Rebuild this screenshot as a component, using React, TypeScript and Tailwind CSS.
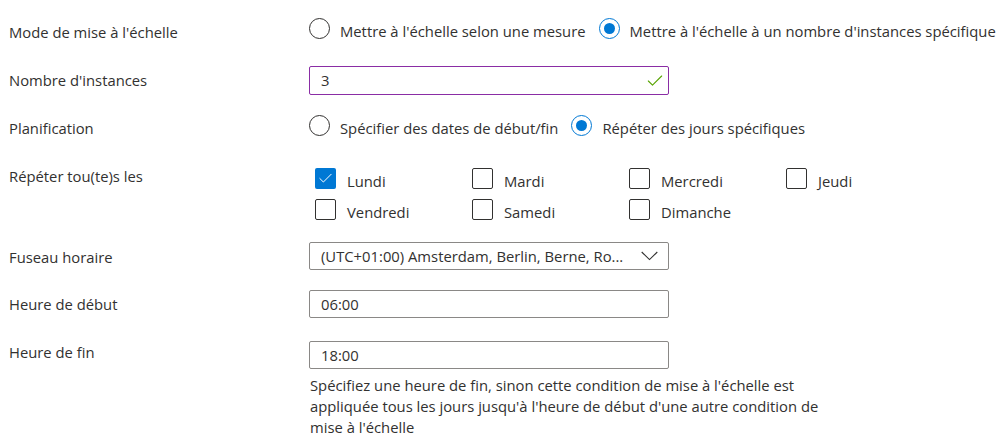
import { Check } from 'lucide-react';

function Radio({ label, checked }: { label: string; checked?: boolean }) {
  return (
    <label className="flex h-[21px] items-center">
      <span
        className={
          checked
            ? 'flex h-[21px] w-[21px] shrink-0 items-center justify-center rounded-full border border-[#0078d4] bg-white'
            : 'flex h-[21px] w-[21px] shrink-0 items-center justify-center rounded-full border border-[#323130] bg-white'
        }
      >
        {checked && <span className="h-[11px] w-[11px] rounded-full bg-[#0078d4]" />}
      </span>
      <span className="ml-[10px] translate-y-[2px] whitespace-nowrap leading-[20px]">{label}</span>
    </label>
  );
}

function Day({ label, checked }: { label: string; checked?: boolean }) {
  return (
    <label className="flex h-[21px] items-start">
      <span
        className={
          checked
            ? 'flex h-[21px] w-[21px] items-center justify-center rounded-[2px] bg-[#0078d4]'
            : 'h-[21px] w-[21px] rounded-[2px] border border-[#323130] bg-white'
        }
      >
        {checked && <Check className="h-[17px] w-[17px] text-white" strokeWidth={1.4} />}
      </span>
      <span className="ml-[11px] mt-[3px] leading-[20px]">{label}</span>
    </label>
  );
}

const days = [
  { label: 'Lundi', checked: true },
  { label: 'Mardi' },
  { label: 'Mercredi' },
  { label: 'Jeudi' },
  { label: 'Vendredi' },
  { label: 'Samedi' },
  { label: 'Dimanche' },
];

export default function App() {
  return (
    <div
      className="h-[442px] w-[1006px] overflow-hidden bg-white pl-[9px] pt-[18px] text-[14.8px] text-[#323130]"
      style={{ fontFamily: '"Open Sans", "Noto Sans", sans-serif' }}
    >
      {/* mode */}
      <div className="flex h-[21px]">
        <div className="w-[300px] shrink-0 pt-[4px] leading-[20px]">Mode de mise à l'échelle</div>
        <div className="flex gap-[13px]">
          <Radio label="Mettre à l'échelle selon une mesure" />
          <Radio label="Mettre à l'échelle à un nombre d'instances spécifique" checked />
        </div>
      </div>

      {/* instances */}
      <div className="mt-[27px] flex h-[29px]">
        <div className="w-[300px] shrink-0 pt-[4px] leading-[20px]">Nombre d'instances</div>
        <div className="flex h-[29px] w-[360px] items-center justify-between rounded-[2px] border border-[#8a2da5] pl-[11px] pr-[3px]">
          <span>3</span>
          <Check className="h-[20px] w-[20px] text-[#57a300]" strokeWidth={1.3} />
        </div>
      </div>

      {/* planif */}
      <div className="mt-[20px] flex h-[21px]">
        <div className="w-[300px] shrink-0 pt-[3px] leading-[20px]">Planification</div>
        <div className="flex gap-[13px]">
          <Radio label="Spécifier des dates de début/fin" />
          <Radio label="Répéter des jours spécifiques" checked />
        </div>
      </div>

      {/* days */}
      <div className="mt-[32px] flex">
        <div className="w-[300px] shrink-0 leading-[16px]">Répéter tou(te)s les</div>
        <div className="grid grid-cols-[157px_157px_157px_157px] grid-rows-[21px_21px] gap-y-[10px] pl-[6px]">
          {days.map((d) => (
            <Day key={d.label} label={d.label} checked={d.checked} />
          ))}
        </div>
      </div>

      {/* timezone */}
      <div className="mt-[22px] flex h-[28px]">
        <div className="w-[300px] shrink-0 pt-[5px] leading-[20px]">Fuseau horaire</div>
        <div className="flex h-[28px] w-[360px] items-center justify-between rounded-[2px] border border-[#8a8886] pl-[11px] pr-[10px]">
          <span className="whitespace-nowrap">(UTC+01:00) Amsterdam, Berlin, Berne, Ro...</span>
          <svg width="17" height="10" viewBox="0 0 17 10" fill="none">
            <polyline points="0.7,1 8.5,8.6 16.3,1" stroke="#323130" strokeWidth="1.1" />
          </svg>
        </div>
      </div>

      {/* start */}
      <div className="mt-[20px] flex h-[28px]">
        <div className="w-[300px] shrink-0 pt-[4px] leading-[20px]">Heure de début</div>
        <div className="flex h-[28px] w-[360px] items-center rounded-[2px] border border-[#8a8886] pl-[11px]">
          06:00
        </div>
      </div>

      {/* end */}
      <div className="mt-[23px] flex">
        <div className="w-[300px] shrink-0 pt-[1px] leading-[20px]">Heure de fin</div>
        <div className="flex flex-col">
          <div className="flex h-[28px] w-[360px] items-center rounded-[2px] border border-[#8a8886] pl-[11px]">
            18:00
          </div>
          <p className="mt-[6px] pl-[1px] leading-[21px]">
            <span className="block whitespace-nowrap">Spécifiez une heure de fin, sinon cette condition de mise à l'échelle est</span>
            <span className="block whitespace-nowrap">appliquée tous les jours jusqu'à l'heure de début d'une autre condition de</span>
            <span className="block whitespace-nowrap">mise à l'échelle</span>
          </p>
        </div>
      </div>
    </div>
  );
}
